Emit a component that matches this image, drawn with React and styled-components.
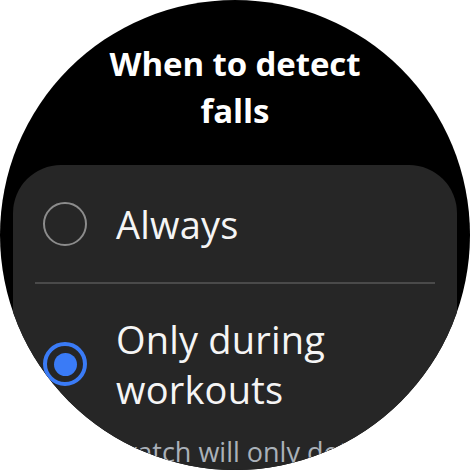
import React from "react";
import styled, { createGlobalStyle } from "styled-components";

const Global = createGlobalStyle`
  html, body { margin: 0; padding: 0; background: #ffffff; }
  body { font-family: "Open Sans", Roboto, sans-serif; }
`;

const Face = styled.div`
  width: 470px;
  height: 470px;
  border-radius: 50%;
  background: #000000;
  overflow: hidden;
  display: flex;
  flex-direction: column;
  align-items: center;
`;

const Title = styled.h1`
  margin: 0;
  padding-top: 40px;
  width: 300px;
  text-align: center;
  color: #ffffff;
  font-family: "Open Sans", Roboto, sans-serif;
  font-weight: 700;
  font-size: 33px;
  line-height: 47px;
  letter-spacing: -0.1px;
`;

const Card = styled.div`
  margin-top: 31px;
  width: 444px;
  background: #262626;
  border-radius: 48px 48px 0 0;
  display: flex;
  flex-direction: column;
`;

const Row = styled.div`
  display: flex;
  align-items: center;
  gap: 29px;
  padding-left: 30px;
  height: ${(p) => p.$h}px;
`;

const Radio = styled.span`
  flex: none;
  box-sizing: border-box;
  width: 44px;
  height: 44px;
  border-radius: 50%;
  border: ${(p) => (p.$checked ? "4.5px solid #3a7bf6" : "2.5px solid #8c8c8c")};
  display: flex;
  align-items: center;
  justify-content: center;
  &::after {
    content: "";
    display: ${(p) => (p.$checked ? "block" : "none")};
    width: 23px;
    height: 23px;
    border-radius: 50%;
    background: #3a7bf6;
  }
`;

const Label = styled.span`
  color: #f5f5f5;
  font-family: "Open Sans", Roboto, sans-serif;
  font-size: 38px;
  line-height: 50px;
  font-weight: 400;
  letter-spacing: 0.2px;
`;

const Divider = styled.div`
  height: 2px;
  margin: 0 22px;
  background: #4a4a4a;
`;

const Note = styled.p`
  margin: -10px 0 0;
  padding: 0 12px 0 36px;
  text-align: center;
  color: #aab1b9;
  font-family: "Open Sans", Roboto, sans-serif;
  font-size: 27px;
  line-height: 36px;
`;

export default function App() {
  return (
    <>
      <Global />
      <Face>
        <Title>When to detect falls</Title>
        <Card>
          <Row $h={117}>
            <Radio />
            <Label>Always</Label>
          </Row>
          <Divider />
          <Row $h={160}>
            <Radio $checked />
            <Label>
              Only during
              <br />
              workouts
            </Label>
          </Row>
          <Note>Your watch will only detect falls during workouts.</Note>
        </Card>
      </Face>
    </>
  );
}
